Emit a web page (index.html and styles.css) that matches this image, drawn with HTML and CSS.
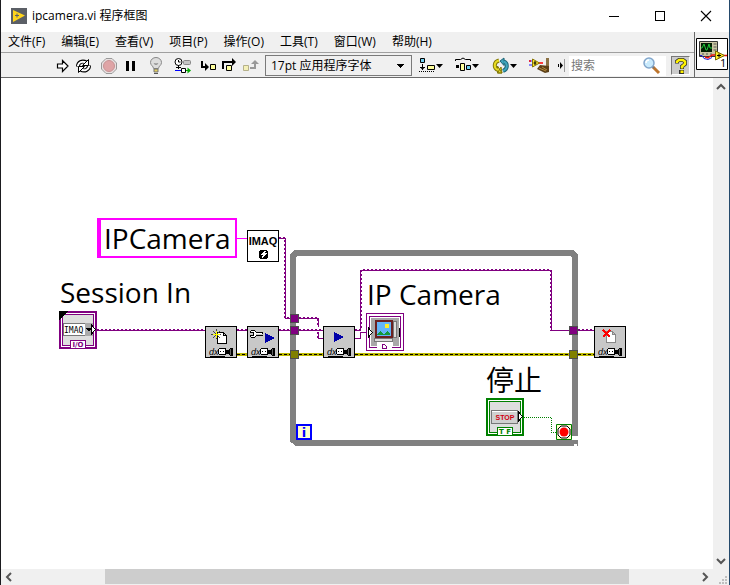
FILE: index.html
```html
<!DOCTYPE html>
<html lang="zh-CN">
<head>
<meta charset="utf-8">
<title>ipcamera.vi 程序框图</title>
<link rel="stylesheet" href="styles.css">
</head>
<body>
<div class="window">
  <header class="titlebar">
    <svg class="app-icon" width="16" height="16" viewBox="0 0 16 16" aria-hidden="true">
      <rect width="16" height="16" fill="#5b5f66"/>
      <path d="M2 2 14 7.500 2 14z" fill="#ffd51c"/>
      <path d="M4 7.500h4M6 5.500v4" stroke="#5b5f66"/>
    </svg>
    <h1 class="title">ipcamera.vi 程序框图</h1>
    <div class="window-buttons">
      <button class="window-button" aria-label="最小化"><svg width="12" height="12" shape-rendering="crispEdges"><path d="M1 6.500h10" stroke="#000"/></svg></button>
      <button class="window-button" aria-label="最大化"><svg width="12" height="12" shape-rendering="crispEdges"><path d="M1.500 1.500h9v9h-9z" fill="none" stroke="#000"/></svg></button>
      <button class="window-button" aria-label="关闭"><svg width="12" height="12"><path d="M1 1 11 11M11 1 1 11" stroke="#000" stroke-width="1.100"/></svg></button>
    </div>
  </header>

  <div class="head">
    <div class="bars">
      <nav class="menubar">
        <button class="menu">文件(F)</button>
        <button class="menu">编辑(E)</button>
        <button class="menu">查看(V)</button>
        <button class="menu">项目(P)</button>
        <button class="menu">操作(O)</button>
        <button class="menu">工具(T)</button>
        <button class="menu">窗口(W)</button>
        <button class="menu">帮助(H)</button>
      </nav>
      <div class="toolbar">
        <div class="group">
          <button class="tool" aria-label="运行"><svg width="20" height="20" viewBox="0 0 20 20"><path d="M5.500 8h5V4.500l5.500 5.500-5.500 5.500V12h-5z" fill="#fff" stroke="#000" stroke-width="1.200"/></svg></button>
          <button class="tool" aria-label="连续运行"><svg width="20" height="20" viewBox="0 0 20 20"><g fill="none"><path d="M5 10.500C5 6.500 9 4 13.500 6.500M16 9.500c0 4-4 6.500-8.500 4" stroke="#000" stroke-width="4"/><path d="M5 10V9.500C5.500 6.500 9 4.500 13 6.500M16 10v.5c-.5 3-4 5-8 3" stroke="#fff" stroke-width="2"/></g><path d="M15.500 3.500v6h-6zM5.500 16.500v-6h6z" fill="#fff" stroke="#000"/></svg></button>
        </div>
        <div class="group">
          <button class="tool" aria-label="中止执行"><svg width="20" height="20" viewBox="0 0 20 20"><path d="M7 2.500h6L17.500 7v6L13 17.500H7L2.500 13V7z" fill="#e8e0e0" stroke="#999"/><circle cx="10" cy="10" r="5.500" fill="#dfa4a6" stroke="#c79294"/></svg></button>
          <button class="tool" aria-label="暂停"><svg width="20" height="20" viewBox="0 0 20 20" shape-rendering="crispEdges"><path d="M6 5h3v10H6zM12 5h3v10h-3z"/></svg></button>
        </div>
        <div class="group">
          <button class="tool" aria-label="高亮显示执行过程"><svg width="20" height="20" viewBox="0 0 20 20"><path d="M7.500 12.500C7.500 10 4.500 9.500 4.500 6.500a5.500 5 0 0 1 11 0c0 3-3 3.500-3 6z" fill="#ddd" stroke="#888"/><path d="M8 7l1.500 2L10 7l.5 2L12 7" fill="none" stroke="#999"/><path d="M8 13h4v3H8z" fill="#e3cf5e" stroke="#777"/><path d="M8 17.500h4" stroke="#555"/></svg></button>
        </div>
        <div class="group">
          <button class="tool" aria-label="保存连线值"><svg width="20" height="20" viewBox="0 0 20 20"><circle cx="6.500" cy="6" r="3.500" fill="#fff" stroke="#000"/><path d="M6.500 4v2h2M6.500 9v4M4 11.500h5" fill="none" stroke="#000"/><rect x="11.500" y="4.500" width="7" height="4" rx="1" fill="#c4c4c4" stroke="#888"/><path d="M3 14.500h6" stroke="#00f"/><path d="M9.500 12.500h4v4h-4z" fill="#fff" stroke="#000"/><path d="M14 14.500h2" stroke="#0a0"/><path d="M15.500 11.500 19 14.500 15.500 17.500z" fill="#0a0"/></svg></button>
        </div>
        <div class="group">
          <button class="tool" aria-label="单步步入"><svg width="20" height="20" viewBox="0 0 20 20"><path d="M4 5v6h5" fill="none" stroke="#000" stroke-width="2"/><path d="M7 7l4 4-4 4z"/><path d="M12.500 8.500h5v5h-5z" fill="#ffff9c" stroke="#000"/></svg></button>
          <button class="tool" aria-label="单步步过"><svg width="20" height="20" viewBox="0 0 20 20"><path d="M4 13V6h10" fill="none" stroke="#000" stroke-width="2"/><path d="M13 2l4 4-4 4z"/><path d="M7.500 9.500h5v5h-5z" fill="#ffff9c" stroke="#000"/></svg></button>
          <button class="tool" aria-label="单步步出"><svg width="20" height="20" viewBox="0 0 20 20"><path d="M3.500 9.500h5v5h-5z" fill="#f4f0b8" stroke="#b5b18a"/><path d="M10 12h5V7" fill="none" stroke="#999" stroke-width="2"/><path d="M11 8l4-4 4 4z" fill="#999"/></svg></button>
        </div>
        <select class="font-select" aria-label="字体"><option>17pt 应用程序字体</option></select>
        <div class="group wide">
          <button class="tool" aria-label="对齐对象"><svg width="26" height="20" viewBox="0 0 26 20"><path d="M3.500 2.500h4v4h-4z" fill="#6fd0f0" stroke="#000"/><path d="M5.500 8v6M3 11.500h5" stroke="#000"/><path d="M3 11h5l-2.500 3z"/><path d="M10.500 9.500h7v4h-7z" fill="#ffff9c" stroke="#000"/><path d="M2 15.500h16" stroke="#000" stroke-dasharray="1 1"/><path d="M19 8h7l-3.500 4z"/></svg></button>
          <button class="tool" aria-label="分布对象"><svg width="26" height="20" viewBox="0 0 26 20"><path d="M1.500 5V3.500h5L9 2l2.500 1.500h5V5" fill="none" stroke="#000"/><path d="M2 9h3v3H2z"/><path d="M6.500 7.500h4v7h-4z" fill="#ffff9c" stroke="#000"/><path d="M12.500 9.500h4v4h-4z" fill="#6fd0f0" stroke="#000"/><path d="M18 8h7l-3.500 4z"/></svg></button>
          <button class="tool" aria-label="重新排序"><svg width="26" height="20" viewBox="0 0 26 20"><g fill="none"><path d="M8 4.500C2.500 6 2.500 12 7 14" stroke="#82780a" stroke-width="4"/><path d="M12 15c5-2 5-8 .5-9.500" stroke="#1d6577" stroke-width="4"/></g><path d="M6.500 10v7H11zM6.500 17H11l-1-6z" fill="#e8dc24" stroke="#82780a"/><path d="M13 9.500V2L9 5z" fill="#3fa6bd" stroke="#1d6577"/><g fill="none"><path d="M8 4.500C2.500 6 2.500 12 7 14" stroke="#e8dc24" stroke-width="2"/><path d="M12 15c5-2 5-8 .5-9.500" stroke="#3fa6bd" stroke-width="2"/></g><path d="M19 8h7l-3.500 4z"/></svg></button>
          <button class="tool" aria-label="整理程序框图"><svg width="26" height="20" viewBox="0 0 26 20"><path d="M1 5h4M1 9h5" stroke="#22f"/><path d="M1 5h2M9 7h6" stroke="#f00" stroke-width="1.500"/><path d="M4.500 3v8l7-4z" fill="#ffee30" stroke="#8a7500"/><path d="M7 5v4M5.500 7h3" stroke="#000"/><path d="M18 2h3v8h-3z" fill="#8c7245"/><path d="M12 9l9 1v6l-4 1-8-4z" fill="#5b4018"/><path d="M11 12l7 3M14 11l5 3" stroke="#b58b3d"/></svg></button>
        </div>
        <svg class="more" width="5" height="7" viewBox="0 0 5 7" aria-hidden="true"><path d="M0 2h1v3H0zM2 0l3 3.500L2 7z"/></svg>
        <span class="separator"></span>
        <label class="search">
          <input class="search-input" type="text" placeholder="搜索" aria-label="搜索">
          <svg width="20" height="20" viewBox="0 0 20 20" aria-hidden="true"><path d="M11 11l6 6" stroke="#bd752d" stroke-width="3"/><path d="M10 10l2 2" stroke="#777" stroke-width="2"/><circle cx="7" cy="7" r="5" fill="#c9eafc" stroke="#83a6cb" stroke-width="1.500"/><path d="M4 7a3 3 0 0 1 3-3" fill="none" stroke="#fff" stroke-width="1.500"/></svg>
        </label>
        <button class="help" aria-label="显示即时帮助"><svg width="16" height="18" viewBox="0 0 16 18"><path d="M4 6.500V4.500L6 3h4l2 1.500V7L9 9.500V12" fill="none" stroke="#333" stroke-width="4"/><path d="M6 13h5v4H6z" fill="#333"/><path d="M4 6V4.500L6 3h4l2 1.500V7L9 9.500v2" fill="none" stroke="#fff200" stroke-width="2.500"/><path d="M7.500 13.500h3V16h-3z" fill="#fff200"/></svg></button>
      </div>
    </div>
    <div class="vi-panel">
      <svg width="32" height="32" viewBox="0 0 32 32" role="img" aria-label="VI 图标">
        <path d="M.5.5h31v31H.5z" fill="#fff" stroke="#000"/>
        <path d="M3.500 3.500h18v15h-18z" fill="#c9c5a2" stroke="#333"/>
        <path d="M5 5h11v9H5z" fill="#021d02"/>
        <path d="M5 10h1l2-4 2 6h1l2-6 1 4h2" fill="none" stroke="#22c938"/>
        <path d="M17.500 6h3M17.500 9h3M17.500 12h3M6 16h2M10 16h2M14 16h2" stroke="#555"/>
        <path d="M4 17.500h2l2 3 4 1 4-2" fill="none" stroke="#22d"/>
        <path d="M9 19l3 1 4-3h4M27 17.500h4" fill="none" stroke="#e11" stroke-width="1.500"/>
        <path d="M19.500 13v9l9-4.500z" fill="#ffec2b" stroke="#7b6900"/>
        <path d="M21 17.500h4M23 15.500v4" stroke="#000"/>
        <text class="pin-text" x="24" y="29">1</text>
      </svg>
    </div>
  </div>

  <main class="workspace">
    <div class="canvas">
      <svg class="diagram" width="712" height="491" viewBox="1 78 712 491" shape-rendering="crispEdges" aria-hidden="true">
        <defs>
          <g id="node">
            <path d="M.5.5h31v31H.5z" fill="#c8c8c8" stroke="#000"/>
            <path d="M14.500 22.500h6v6h-6l-1-1v-4z" fill="#fff" stroke="#000"/>
            <path d="M15 25.500h1M18 25.500h1M5 30.500h15" stroke="#000"/>
            <path d="M20 24h3l3-2h2v8h-2l-3-2h-3z"/>
            <path d="M25 23v6" stroke="#666"/>
            <text class="dx-text" x="4" y="29">dx</text>
          </g>
          <path id="play" d="M0 0l10 5-10 5z" fill="#0000a8"/>
          <path id="page" d="M.5.5h6l3 3v8h-9zM6.500.5v3h3" fill="#fff"/>
        </defs>

        <path class="loop" d="M293 256V440L296 442.500H578M575 436V256L572 253H296L293 256V260"/>
        <path d="M571 437h7M574 445h3" stroke="#fff" stroke-width="2"/>

        <g class="wire">
          <path d="M97 330.500H205M237 330.500h10M279 330.500h11M299 330.500h24M279 238.500h6.500V318.500h5M299 318.500h19.500V327M318.500 332v6.500h5M355 330.500h5.500V270.500H551.500V330.500H569M578 330.500h16M355 338.500h5.500V332.500h6"/>
          <path class="wire-dots" d="M97 329.500H205M237 329.500h10M279 329.500h11M299 329.500h24M279 237.500h5.500V317.500h5M299 317.500h18.500V327M317.500 332v6.500M355 329.500h6.500V269.500H550.500V330.500H569M578 329.500h16"/>
        </g>
        <path d="M237 238.500h10" stroke="#f0f"/>
        <g class="error-wire">
          <path class="error-edge" d="M237 354.500h10M279 354.500h11M299 354.500h24M355 354.500H569M578 354.500h16"/>
          <path class="error-core" d="M237 354.500h10M279 354.500h11M299 354.500h24M355 354.500H569M578 354.500h16"/>
        </g>
        <path d="M524 417.500h27.500V432.500h4" fill="none" stroke="#008000" stroke-dasharray="1 1"/>

        <g fill="#800080" stroke="#4d4d4d">
          <path d="M290.500 314.500h8v8h-8zM290.500 326.500h8v8h-8zM569.500 326.500h8v8h-8z"/>
          <path d="M290.500 350.500h8v8h-8zM569.500 350.500h8v8h-8z" fill="#808000"/>
        </g>

        <g transform="translate(247 230)">
          <path d="M.5.5h31v31H.5z" fill="#fff" stroke="#000"/>
          <text class="imaq-title" x="16" y="15" text-anchor="middle">IMAQ</text>
          <path d="M13 20h7v1h1v7h-1v1h-7v-1h-1v-7h1z"/>
          <path d="M17 21h2l-1 2h2l-5 5 1-3h-2z" fill="#fff"/>
        </g>

        <g transform="translate(205 326)">
          <use href="#node"/>
          <use href="#page" x="12" y="6" stroke="#000"/>
          <path d="M11.500 3v10M6 8.500h10M8 5l7 7M15 5l-7 7" stroke="#444"/>
          <path d="M11.500 5v7M8 8.500h7" stroke="#ff0"/>
        </g>
        <g transform="translate(247 326)">
          <use href="#node"/>
          <path d="M4.500 4.500h3l2 2h6v3h-6l-2 2h-3l-1-1v-1h3v-3h-3v-1z" fill="#fff" stroke="#000"/>
          <path d="M9 8h7" stroke="#c8c8c8" stroke-width="1"/>
          <use href="#play" x="18" y="7"/>
        </g>
        <g transform="translate(323 326)">
          <use href="#node"/>
          <use href="#play" x="11" y="6"/>
        </g>
        <g transform="translate(594 326)">
          <use href="#node"/>
          <use href="#page" x="12" y="5" stroke="#888"/>
          <path d="M9 4l7 7M16 4l-7 7" stroke="#f00" stroke-width="2"/>
        </g>

        <g transform="translate(59 311)">
          <path d="M1 1h36v36H1z" fill="#fff" stroke="#800080" stroke-width="2"/>
          <path d="M3.500 3.500h31v31h-31z" fill="#dedede" stroke="#800080"/>
          <path d="M0 0h9L0 9z"/>
          <path d="M4.500 12.500h22v12h-22z" fill="#fff" stroke="#777"/>
          <path d="M26 12h8v13h-8z" fill="#aaa"/>
          <path d="M27 17h6l-3 4z"/>
          <text class="imaq-small" x="5" y="22">IMAQ</text>
          <path d="M32.500 14v9l4-4.500z" fill="#fff" stroke="#000"/>
          <path d="M11.500 29.500h15v8h-15z" fill="#fff" stroke="#800080"/>
          <text class="tag purple" x="19" y="36" text-anchor="middle">I/O</text>
        </g>

        <g transform="translate(366 313)">
          <path d="M.5.500h37v37H.5z" fill="#fff" stroke="#800080"/>
          <path d="M3.500 3.500h31v31h-31z" fill="#fff" stroke="#800080"/>
          <path d="M5 5h28v28h-6v-4H11v4H5z" fill="#a8a8a8"/>
          <path d="M9.500 7.500h16v16h-16z" fill="#64b5f8" stroke="#6b2121" stroke-width="2"/>
          <circle cx="21" cy="13" r="2.500" fill="#ffed28"/>
          <path d="M11 22v-1l3-3 4 3 3-3 3 3v1z" fill="#12993a"/>
          <path d="M27.500 8.500h3v16h-3z" fill="#ddd" stroke="#777"/>
          <path d="M8.500 25.500h18v3h-18z" fill="#ddd" stroke="#777"/>
          <path d="M2.500 15v9l4-4.500z" fill="#fff" stroke="#000"/>
          <path d="M33 15h1v9h-1z"/>
          <path d="M11 30h15v7H11z" fill="#fff"/>
          <path d="M16.500 31.500h2l2 2v2h-4z" fill="#fff" stroke="#800080"/>
        </g>

        <g transform="translate(486 398)">
          <path d="M1 1h36v36H1z" fill="#fff" stroke="#008000" stroke-width="2"/>
          <path d="M3.500 3.500h31v31h-31z" fill="#dedede" stroke="#008000"/>
          <path d="M5.500 12.500h26v13h-26z" fill="#d0d0d0" stroke="#777"/>
          <path d="M6 13.500h25" stroke="#fff"/>
          <text class="stop-text" x="19" y="22" text-anchor="middle">STOP</text>
          <path d="M32.500 14v9l4-4.500z" fill="#fff" stroke="#000"/>
          <path d="M11.500 29.500h15v8h-15z" fill="#fff" stroke="#008000"/>
          <text class="tag green" x="19" y="36" text-anchor="middle">T F</text>
        </g>

        <g transform="translate(556 424)" shape-rendering="auto">
          <path d="M.5.5h15v15H.5z" fill="#ffffce" stroke="#008000"/>
          <path d="M5 2h6l3 3v6l-3 3H5l-3-3V5z" fill="#fff" stroke="#000"/>
          <circle cx="8" cy="8" r="4.500" fill="#f00"/>
        </g>
        <g transform="translate(296 424)">
          <path d="M1 1h14v14H1z" fill="#ffffce" stroke="#00f" stroke-width="2"/>
          <text class="i-text" x="8" y="13" text-anchor="middle">i</text>
        </g>
      </svg>
      <span class="label constant">IPCamera</span>
      <span class="label session">Session In</span>
      <span class="label camera">IP Camera</span>
      <span class="label stop">停止</span>
    </div>
    <div class="scroll-v">
      <svg width="16" height="16" viewBox="0 0 16 16"><path d="M4 11l4-4 4 4" class="chevron"/></svg>
      <svg width="16" height="16" viewBox="0 0 16 16"><path d="M4 6l4 4 4-4" class="chevron"/></svg>
    </div>
    <div class="scroll-h">
      <svg width="16" height="15" viewBox="0 0 16 15"><path d="M10 4L6 8l4 4" class="chevron"/></svg>
      <div class="track"><div class="thumb"></div></div>
      <svg width="16" height="15" viewBox="0 0 16 15"><path d="M6 4l4 4-4 4" class="chevron"/></svg>
    </div>
    <svg class="grip" width="16" height="16" viewBox="0 0 16 16" shape-rendering="crispEdges"><path d="M12 7h2v2h-2zM9 10h2v2H9zM12 10h2v2h-2zM6 13h2v2H6zM9 13h2v2H9zM12 13h2v2h-2z" fill="#bfbfbf"/></svg>
  </main>
</div>
</body>
</html>
```
FILE: styles.css
```css
* { box-sizing: border-box; }

body {
  margin: 0;
  font: 12px/16px "Open Sans", "Noto Sans CJK SC", sans-serif;
  color: #000;
}

button {
  margin: 0;
  padding: 0;
  border: 0;
  background: none;
  font: inherit;
  color: inherit;
}

svg { display: block; }

.window {
  display: flex;
  flex-direction: column;
  height: 100vh;
  border-left: 1px solid #1b1b1f;
  border-right: 1px solid #24496b;
  background: #f0f0f0;
}

.titlebar {
  display: flex;
  align-items: center;
  height: 32px;
  padding-left: 10px;
  background: #fff;
}

.title {
  flex: 1;
  margin: 0 0 0 5px;
  font-size: 12px;
  font-weight: 400;
}

.window-buttons { display: flex; }

.window-button {
  display: flex;
  align-items: center;
  justify-content: center;
  width: 46px;
  height: 32px;
}

.head {
  display: flex;
  border-bottom: 1px solid #696969;
}

.bars {
  flex: 1;
  min-width: 0;
}

.menubar {
  display: flex;
  align-items: center;
  gap: 16px;
  height: 21px;
  padding-left: 7px;
  border-bottom: 1px solid #a0a0a0;
  white-space: nowrap;
}

.toolbar {
  display: flex;
  align-items: center;
  gap: 5px;
  height: 24px;
  padding: 1px 4px 0 50px;
}

.group { display: flex; }

.tool {
  display: flex;
  justify-content: center;
  width: 21px;
}

.wide { gap: 11px; }

.wide .tool { width: 26px; }

.font-select {
  width: 147px;
  height: 21px;
  padding: 0 20px 0 5px;
  appearance: none;
  border: 1px solid #7a7a7a;
  border-radius: 0;
  background:
    linear-gradient(#000, #000) 131px 8px / 7px 1px no-repeat,
    linear-gradient(#000, #000) 132px 9px / 5px 1px no-repeat,
    linear-gradient(#000, #000) 133px 10px / 3px 1px no-repeat,
    linear-gradient(#000, #000) 134px 11px / 1px 1px no-repeat,
    #f0f0f0;
  font: inherit;
  color: #000;
}

.more { margin-left: -1px; }

.separator {
  width: 1px;
  height: 13px;
  margin-left: -4px;
  background: #999;
}

.search {
  display: flex;
  flex: 1;
  align-items: center;
  min-width: 0;
  height: 20px;
  margin-left: -1px;
  padding: 0 4px 0 2px;
  background: #fff;
}

.search-input {
  flex: 1;
  min-width: 0;
  padding: 0;
  border: 0;
  outline: 0;
  background: none;
  font: inherit;
}

.search-input::placeholder { color: #777; }

.help {
  display: flex;
  align-items: center;
  justify-content: center;
  width: 19px;
  height: 19px;
  border: 1px solid #777;
  border-right-color: #fff;
  border-bottom-color: #fff;
  background: #ccc;
}

.vi-panel {
  width: 35px;
  padding: 6px 1px 0;
  border-left: 1px solid #696969;
}

.pin-text { font: 11px "Open Sans", sans-serif; }

.workspace {
  display: grid;
  flex: 1;
  grid-template: minmax(0, 1fr) 16px / minmax(0, 1fr) 16px;
  min-height: 0;
}

.canvas {
  position: relative;
  overflow: hidden;
  background: #fff;
}

.diagram {
  position: absolute;
  top: 0;
  left: 0;
}

.label {
  position: absolute;
  font-size: 28px;
  line-height: 36px;
  white-space: nowrap;
}

.constant {
  top: 140px;
  left: 96px;
  width: 140px;
  padding-left: 3px;
  border: 2px solid #f0f;
  border-left-width: 4px;
  background: #fff;
}

.session { top: 196px; left: 59px; }
.camera { top: 198px; left: 366px; }
.stop { top: 284px; left: 485px; }

.loop {
  fill: none;
  stroke: #808080;
  stroke-width: 6;
}

.wire {
  fill: none;
  stroke: #800080;
}

.wire-dots { stroke-dasharray: 2 2; }

.error-edge {
  stroke: #bcb800;
  stroke-width: 3;
}

.error-core {
  stroke: #000;
  stroke-dasharray: 3 2;
}

.dx-text { font: italic 9px "Liberation Sans", sans-serif; }
.imaq-title { font: bold 11px "Liberation Sans", sans-serif; }
.imaq-small { font: 8px "DejaVu Sans Mono", monospace; }
.tag { font: bold 7px "DejaVu Sans", sans-serif; }
.purple { fill: #800080; }
.green { fill: #008000; }
.stop-text { font: bold 7px "Liberation Sans", sans-serif; fill: #d00010; }
.i-text { font: bold 13px "DejaVu Sans", sans-serif; fill: #00f; }

.scroll-v {
  display: flex;
  flex-direction: column;
  justify-content: space-between;
}

.scroll-h { display: flex; }

.track { flex: 1; }

.thumb {
  width: 77%;
  height: 15px;
  margin-left: 13%;
  background: #cdcdcd;
}

.chevron {
  fill: none;
  stroke: #555;
  stroke-width: 2;
}
```
